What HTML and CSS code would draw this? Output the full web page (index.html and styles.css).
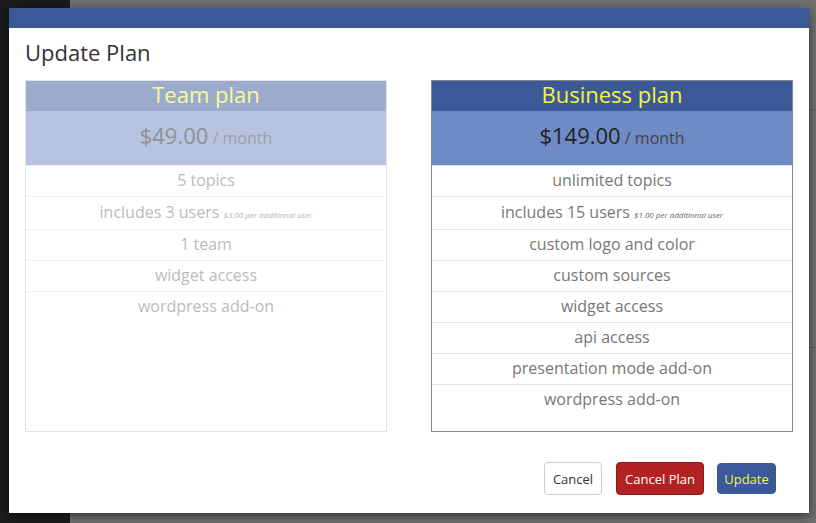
FILE: index.html
```html
<!DOCTYPE html>
<html lang="en">
<head>
<meta charset="utf-8">
<title>Update Plan</title>
<link rel="stylesheet" href="styles.css">
</head>
<body>
<div class="page">
  <aside class="sidebar"></aside>
  <main class="main">
    <div class="main-line line-a"></div>
    <div class="main-line line-b"></div>
  </main>
</div>

<div class="modal">
  <div class="modal-bar"></div>
  <h1 class="modal-title">Update Plan</h1>
  <div class="plans">
    <section class="plan plan-team">
      <div class="plan-name">Team plan</div>
      <div class="plan-price"><span class="amount">$49.00</span> <span class="per">/ month</span></div>
      <ul class="features">
        <li>5 topics</li>
        <li class="tall">includes 3 users <small>$3.00 per additional user</small></li>
        <li>1 team</li>
        <li>widget access</li>
        <li>wordpress add-on</li>
      </ul>
    </section>
    <section class="plan plan-business">
      <div class="plan-name">Business plan</div>
      <div class="plan-price"><span class="amount">$149.00</span> <span class="per">/ month</span></div>
      <ul class="features">
        <li>unlimited topics</li>
        <li class="tall">includes 15 users <small>$1.00 per additional user</small></li>
        <li>custom logo and color</li>
        <li>custom sources</li>
        <li>widget access</li>
        <li>api access</li>
        <li>presentation mode add-on</li>
        <li>wordpress add-on</li>
      </ul>
    </section>
  </div>
  <div class="modal-footer">
    <button class="btn btn-default">Cancel</button>
    <button class="btn btn-danger">Cancel Plan</button>
    <button class="btn btn-primary">Update</button>
  </div>
</div>
</body>
</html>
```

FILE: styles.css
```css
* { box-sizing: border-box; }
html, body { margin: 0; padding: 0; height: 100%; }
body {
  font-family: "Open Sans", "Lato", "Liberation Sans", sans-serif;
  background: #6f6f6f;
  overflow: hidden;
}
.page { display: flex; height: 523px; }
.sidebar { width: 70px; background: #1b1b1b; }
.main { flex: 1; background: #707070; }
.main-line { height: 1px; background: #5e5e5e; }
.line-a { margin-top: 109px; }
.line-b { margin-top: 237px; }

.modal {
  position: absolute;
  left: 9px;
  top: 8px;
  width: 800px;
  height: 505px;
  background: #fff;
  box-shadow: 0 3px 10px rgba(0,0,0,.55);
  display: flex;
  flex-direction: column;
}
.modal-bar { height: 20px; background: #3b5998; }
.modal-title {
  margin: 0;
  height: 52px;
  padding: 10px 16px 0;
  font-size: 22px;
  line-height: 28px;
  font-weight: 400;
  color: #333;
}
.plans { display: flex; gap: 44px; padding: 0 16px; }
.plan {
  width: 362px;
  border: 1px solid #888;
  text-align: center;
  background: #fff;
}
.plan-team { opacity: .5; border-color: #cbcbcb; }
.plan-name {
  height: 30px;
  line-height: 27px;
  background: #3b5998;
  color: #f4f43c;
  font-size: 22px;
}
.plan-price {
  height: 55px;
  line-height: 48px;
  background: #6f8bc6;
  border-bottom: 1px solid #dde4f2;
}
.amount { font-size: 22px; color: #222; }
.per { font-size: 16px; color: #444; }
.features { list-style: none; margin: 0; padding: 0 0 16px; }
.features li {
  height: 31px;
  line-height: 29px;
  border-bottom: 1px solid #e5e5e5;
  font-size: 16px;
  color: #777;
}
.features li.tall { height: 33px; line-height: 31px; }
.features li:last-child { border-bottom: 0; height: 30px; }
.features small { font-size: 8px; line-height: 1; font-style: italic; color: #666; }

.modal-footer {
  display: flex;
  justify-content: flex-end;
  align-items: center;
  padding: 30px 33px 0 0;
}
.btn {
  font-family: inherit;
  font-size: 13px;
  height: 33px;
  border-radius: 4px;
  border: 1px solid #ccc;
  padding: 0;
  cursor: pointer;
}
.btn-default { width: 58px; background: #fff; color: #333; }
.btn-danger { width: 88px; margin-left: 14px; background: #b22222; border-color: #8e1b1b; color: #fff; }
.btn-primary { width: 59px; height: 31px; margin-left: 13px; background: #3b5998; border-color: #3b5998; color: #f4f43c; }
```
